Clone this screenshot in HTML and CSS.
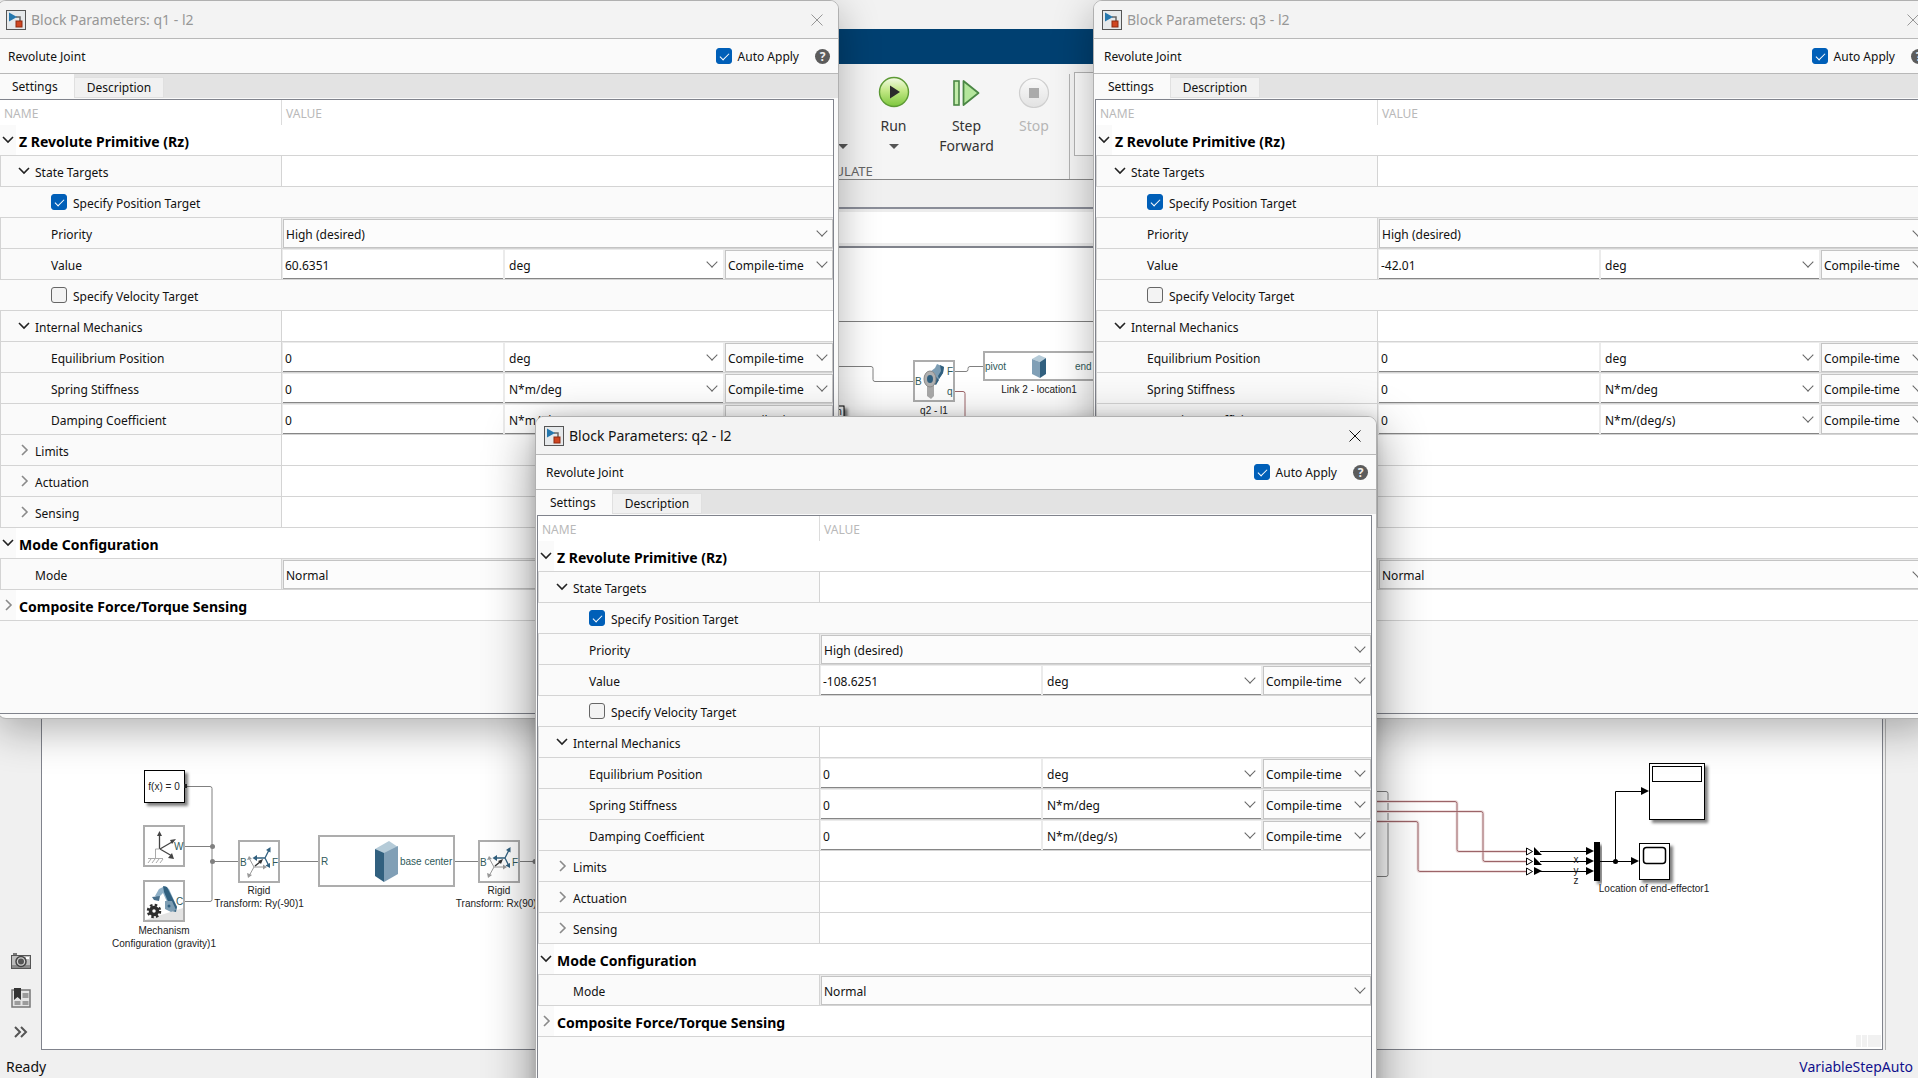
FILE: index.html
```
<!DOCTYPE html>
<html lang="en">
<head>
    <meta charset="UTF-8">
    <meta name="viewport" content="width=device-width, initial-scale=1.0">
    <title>Block Parameters</title>
    <link rel="stylesheet" href="styles.css">
</head>
<body>
    <div class="model-window">
        <div class="window-title"></div>
        <div class="tab-bar"></div>
        <div class="toolstrip">
            <div class="section">
                <div class="tools">
                    <button class="tool tool-narrow" aria-label="More"><span class="caret"></span></button>
                    <button class="tool tool-wide">
                        <svg width="32" height="32" viewBox="0 0 32 32">
                            <defs>
                                <linearGradient id="runFill" x1="0" y1="0" x2="0" y2="1">
                                    <stop offset="0" stop-color="#f4fbe6"/>
                                    <stop offset="0.45" stop-color="#c3e886"/>
                                    <stop offset="1" stop-color="#7cc63c"/>
                                </linearGradient>
                                <linearGradient id="stopFill" x1="0" y1="0" x2="0" y2="1">
                                    <stop offset="0" stop-color="#fafafa"/>
                                    <stop offset="1" stop-color="#e2e2e2"/>
                                </linearGradient>
                            </defs>
                            <circle cx="16" cy="16" r="14.5" fill="url(#runFill)" stroke="#5d9a35" stroke-width="1.4"/>
                            <path d="M12 9.5v13l10-6.5z" fill="#2b2b2b"/>
                        </svg>
                        <span>Run</span>
                        <span class="caret"></span>
                    </button>
                    <button class="tool tool-wide">
                        <svg width="32" height="32" viewBox="0 0 32 32">
                            <rect x="3" y="5" width="5" height="24" fill="#c3ecaa" stroke="#4b8745" stroke-width="1.6"/>
                            <path d="M12.500 5v24l15-12z" fill="#b4e69c" stroke="#4b8745" stroke-width="1.8" stroke-linejoin="round"/>
                        </svg>
                        <span>Step<br>Forward</span>
                    </button>
                    <button class="tool" disabled>
                        <svg width="32" height="32" viewBox="0 0 32 32">
                            <circle cx="16" cy="17" r="14.5" fill="url(#stopFill)" stroke="#cfcfcf" stroke-width="1.2"/>
                            <rect x="11" y="12" width="10" height="10" fill="#ababab"/>
                        </svg>
                        <span>Stop</span>
                    </button>
                </div>
                <div class="section-name">SIMULATE</div>
            </div>
            <div class="gallery"></div>
        </div>
        <div class="file-tabs"></div>
        <div class="breadcrumb"></div>
        <div class="editor">
            <div class="palette">
                <svg width="20" height="17" viewBox="0 0 20 17">
                    <rect x="2" y="0" width="4" height="3" fill="#777"/>
                    <rect x="0.5" y="2.500" width="19" height="13" fill="#bdbdbd" stroke="#555"/>
                    <rect x="1" y="12" width="18" height="3" fill="#8a8a8a"/>
                    <circle cx="10" cy="8.500" r="5" fill="#cfcfcf" stroke="#444" stroke-width="1.5"/>
                    <circle cx="10" cy="8.500" r="3" fill="#555"/>
                    <rect x="15" y="4" width="3" height="2" fill="#fff"/>
                </svg>
                <svg width="20" height="20" viewBox="0 0 20 20">
                    <rect x="1" y="2" width="18" height="17" fill="#e4e4e4" stroke="#777" stroke-width="1.5"/>
                    <rect x="11.500" y="5" width="6" height="5" fill="#9b9b9b"/>
                    <rect x="3.500" y="13" width="6" height="4" fill="#9b9b9b"/>
                    <rect x="11.500" y="13" width="6" height="4" fill="#9b9b9b"/>
                    <path d="M3 0h7v12l-3.500-3L3 12z" fill="#333"/>
                </svg>
                <svg width="20" height="12" viewBox="0 0 20 12">
                    <path d="M4 1l5 5-5 5M10 1l5 5-5 5" fill="none" stroke="#555" stroke-width="2"/>
                </svg>
            </div>
            <div class="canvas">
                <svg class="diagram" width="1900" height="800">
                    <defs>
                        <filter id="drop" x="-20%" y="-20%" width="150%" height="150%">
                            <feDropShadow dx="3" dy="3" stdDeviation="1.500" flood-opacity="0.5"/>
                        </filter>
                        <g id="brick">
                            <path d="M0 8l14-8 9 6-14 8z" fill="#b5cbd8"/>
                            <path d="M0 8l9 4v29l-9-6z" fill="#31607f"/>
                            <path d="M9 12l14-7v28l-14 8z" fill="#809fb6"/>
                        </g>
                        <!-- small brick, lit from the other side -->
                        <g id="brick-small">
                            <path d="M0 4l7-4 7 3-6 4z" fill="#b5cbd8"/>
                            <path d="M0 4l8 3v16l-8-4z" fill="#809fb6"/>
                            <path d="M8 7l6-4v16l-6 4z" fill="#31607f"/>
                        </g>
                        <!-- rigid transform block, 41 x 41 -->
                        <g id="rigid">
                            <rect class="block" x="0" y="0" width="40" height="41"/>
                            <path d="M15 26l-5-9M15 26h10M15 26l-5 9" stroke="#999"/>
                            <path d="M8 19l2-4 3 3zM24 23.500l4 2.500-4 2.500zM8 32l1 5 4-3z" fill="#999"/>
                            <path d="M26 17H16M26 17l4-8M26 17l4 8" stroke="#31607f" stroke-width="1.300"/>
                            <path d="M18 14l-4.500 3 4.500 3zM27 9l4.500-3v5.500zM26.500 24.500l4.500 2.500v-5z" fill="#31607f"/>
                            <path d="M16 25l5-4" stroke="#333" stroke-width="1.500"/>
                            <path d="M19 20l5-2-2 5z" fill="#333"/>
                            <text class="port" x="1" y="25">B</text>
                            <text class="port" x="33" y="25">F</text>
                        </g>
                    </defs>
                    <g transform="translate(-42 -248)">
                        <path class="frame" d="M42 321.500H1883"/>

                        <!-- second arm link -->
                        <path class="wire" d="M830 366.500h41q2 0 2 2v11q0 2 2 2h39M954 371.500h12q2 0 2-2v-1q0-2 2-2h14"/>
                        <path class="signal" d="M954 391.500h9q2 0 2 2v40"/>
                        <rect class="block" x="914" y="361" width="40" height="40"/>
                        <path d="M930 372l5-4 2-4 7 3-1 6-6 9-3 3z" fill="#7d9db3"/>
                        <path d="M940 365l4 2-1 6-4 6-1-3 3-5zM935 376l4 4-3 5-3-2z" fill="#31607f"/>
                        <path d="M927 384h7v12l-3 3-4-3z" fill="#aaa"/>
                        <ellipse cx="930" cy="379" rx="6" ry="8" fill="#b0b0b0" stroke="#8a8a8a"/>
                        <ellipse cx="930" cy="379" rx="3" ry="4" fill="#31607f"/>
                        <text class="port" x="915" y="385">B</text>
                        <text class="port" x="947" y="375">F</text>
                        <text class="port" x="947" y="395">q</text>
                        <text class="label" x="934" y="414">q2 - l1</text>
                        <rect class="block" x="984" y="352" width="130" height="28"/>
                        <use href="#brick-small" x="1032" y="355"/>
                        <text class="port" x="985" y="370">pivot</text>
                        <text class="port" x="1075" y="370">end</text>
                        <text class="label" x="1039" y="393">Link 2 - location1</text>
                        <rect class="sim-block" x="800" y="406" width="44" height="26" filter="url(#drop)"/>
                        <text class="label" x="839" y="415">n</text>

                        <!-- base -->
                        <path class="wire" d="M186 786.500h24q2 0 2 2v111q0 2-2 2h-26M184 846.500h28M212 861.500h27M279 861.500h40M454 861.500h25M519 861.500h30"/>
                        <circle cx="212.500" cy="846.500" r="2.500" fill="#808080"/>
                        <circle cx="212.500" cy="861.500" r="2.500" fill="#808080"/>
                        <circle cx="535" cy="861.500" r="2.500" fill="#808080"/>
                        <rect class="sim-block" x="144.500" y="770.500" width="40" height="32" filter="url(#drop)"/>
                        <rect x="184" y="784" width="3" height="4" fill="#222"/>
                        <text class="label" x="164" y="790">f(x) = 0</text>

                        <rect class="block" x="144" y="826" width="40" height="40"/>
                        <path d="M159.500 849v-14M160 849l12-7M160 849l12 7" stroke="#444" stroke-width="1.300"/>
                        <path d="M157 836l2.500-5 2.500 5zM170 840l6-1-4 5zM172 853l2 6-6-1z" fill="#444"/>
                        <path d="M159.500 849h-4v9M148 858.500h15M151 859l-3 4M155 859l-3 4M159 859l-3 4M163 859l-3 4" fill="none" stroke="#aaa"/>
                        <text class="port" x="174" y="850">W</text>

                        <rect class="block" x="144" y="881" width="40" height="40"/>
                        <path d="M145 920l38-12v12z" fill="#e3e3e3"/>
                        <path d="M155 896l4-7 6-3 4 3 8 18-6 4-8-18-5 5z" fill="#8fb0c7"/>
                        <path d="M163 886l4 1 10 20-1 5-4-1-8-19z" fill="#31607f"/>
                        <path d="M165 901l7 0 4 9-5 2-6-3z" fill="#7d9db3"/>
                        <circle cx="169" cy="906" r="1.500" fill="#31607f"/>
                        <path d="M152 897l8-1-1 5-5-1z" fill="#49708c"/>
                        <circle cx="154" cy="911" r="3.500" fill="none" stroke="#2d2d2d" stroke-width="3.500"/>
                        <circle cx="154" cy="911" r="6" fill="none" stroke="#2d2d2d" stroke-width="2.500" stroke-dasharray="2.500 2.210"/>
                        <text class="port" x="176" y="905">C</text>
                        <text class="label" x="164" y="934">Mechanism</text>
                        <text class="label" x="164" y="947">Configuration (gravity)1</text>

                        <use href="#rigid" x="239" y="841"/>
                        <text class="label" x="259" y="894">Rigid</text>
                        <text class="label" x="259" y="907">Transform: Ry(-90)1</text>
                        <rect class="block" x="319" y="836" width="135" height="50"/>
                        <use href="#brick" x="375" y="841"/>
                        <text class="port" x="321" y="865">R</text>
                        <text class="port" x="400" y="865">base center</text>
                        <use href="#rigid" x="479" y="841"/>
                        <text class="label" x="499" y="894">Rigid</text>
                        <text class="label" x="499" y="907">Transform: Rx(90)1</text>

                        <!-- end effector position -->
                        <path class="wire" d="M1370 791.500h16q2 0 2 2v81q0 2-2 2h-16"/>
                        <path class="halo" d="M1370 801.500h85q2 0 2 2v46q0 2 2 2h67M1370 811.500h111q2 0 2 2v46q0 2 2 2h41M1370 821.500h46q2 0 2 2v46q0 2 2 2h106"/>
                        <path class="signal" d="M1370 801.500h85q2 0 2 2v46q0 2 2 2h67M1370 811.500h111q2 0 2 2v46q0 2 2 2h41M1370 821.500h46q2 0 2 2v46q0 2 2 2h106"/>
                        <path d="M1526.500 848v7l6-3.500zM1526.500 858v7l6-3.500zM1526.500 868v7l6-3.500z" fill="#fff" stroke="#000"/>
                        <path d="M1534 847v8h8zM1534 857v8h8zM1534 867v8l8-4zM1586 847v8l8-4zM1586 857v8l8-4zM1586 867v8l8-4z"/>
                        <path class="line" d="M1540 851.500h48M1540 861.500h48M1540 871.500h48M1600 861.500h32M1615.500 861V791.500H1642"/>
                        <text class="label" x="1576" y="863">x</text>
                        <text class="label" x="1576" y="874">y</text>
                        <text class="label" x="1576" y="884">z</text>
                        <rect x="1594" y="842" width="6" height="39" filter="url(#drop)"/>
                        <circle cx="1615.500" cy="861.500" r="2.500"/>
                        <path d="M1631 857v8l8-4zM1641 787v8l8-4z"/>
                        <rect class="sim-block" x="1649.500" y="763.500" width="55" height="56" filter="url(#drop)"/>
                        <rect class="sim-block" x="1652.500" y="766.500" width="49" height="15"/>
                        <rect class="sim-block" x="1639.500" y="843.500" width="30" height="36" filter="url(#drop)"/>
                        <rect class="sim-block" x="1643.500" y="847.500" width="22" height="16" rx="3" stroke-width="1.500"/>
                        <text class="label" x="1654" y="892">Location of end-effector1</text>
                        <path d="M1856 1035h5v12h-5zM1862 1035h5v12h-5zM1868 1035h13v12h-13z" fill="#f1f1f1"/>
                    </g>
                </svg>
            </div>
            <div class="side-panel"></div>
        </div>
        <div class="status-bar">
            <span>Ready</span>
            <a href="#">VariableStepAuto</a>
        </div>
    </div>

    <div class="desktop" id="dialogs"></div>

    <script>
        const dialogs = [
            { id: 'q1', title: 'q1 - l2', value: '60.6351' },
            { id: 'q3', title: 'q3 - l2', value: '-42.01' },
            { id: 'q2', title: 'q2 - l2', value: '-108.6251', active: true }
        ];

        const rows = [
            { type: 'section', name: 'Z Revolute Primitive (Rz)', open: true },
            { type: 'group', name: 'State Targets', open: true },
            { type: 'check', name: 'Specify Position Target', checked: true },
            { type: 'choice', name: 'Priority', value: 'High (desired)', level: 2 },
            { type: 'quantity', name: 'Value', unit: 'deg' },
            { type: 'check', name: 'Specify Velocity Target', checked: false },
            { type: 'group', name: 'Internal Mechanics', open: true },
            { type: 'quantity', name: 'Equilibrium Position', value: '0', unit: 'deg' },
            { type: 'quantity', name: 'Spring Stiffness', value: '0', unit: 'N*m/deg' },
            { type: 'quantity', name: 'Damping Coefficient', value: '0', unit: 'N*m/(deg/s)' },
            { type: 'group', name: 'Limits' },
            { type: 'group', name: 'Actuation' },
            { type: 'group', name: 'Sensing' },
            { type: 'section', name: 'Mode Configuration', open: true },
            { type: 'choice', name: 'Mode', value: 'Normal', level: 1 },
            { type: 'section', name: 'Composite Force/Torque Sensing' }
        ];

        function toggle(open, name) {
            const d = open ? 'M1 3l5 5 5-5' : 'M4 1l5 5-5 5';
            return `<button class="toggle ${open ? 'open' : ''}"><svg width="12" height="12" viewBox="0 0 12 12"><path d="${d}"/></svg><span>${name}</span></button>`;
        }

        function select(id, value, label, extra) {
            return `<span class="select ${extra}"><select id="${id}" aria-label="${label}"><option>${value}</option></select></span>`;
        }

        function renderRow(row, index, dialog) {
            const id = `${dialog.id}-row${index}`;
            if (row.type === 'section') {
                return `<tr class="section-row"><td colspan="2">${toggle(row.open, row.name)}</td></tr>`;
            }
            if (row.type === 'group') {
                return `<tr><td class="name level-1">${toggle(row.open, row.name)}</td><td></td></tr>`;
            }
            if (row.type === 'check') {
                return `<tr class="check-row"><td colspan="2"><label class="check"><input type="checkbox" ${row.checked ? 'checked' : ''}>${row.name}</label></td></tr>`;
            }
            if (row.type === 'choice') {
                return `<tr><td class="name level-${row.level} plain"><label for="${id}">${row.name}</label></td>
                    <td class="fields"><div>${select(id, row.value, row.name, 'boxed wide')}</div></td></tr>`;
            }
            return `<tr><td class="name level-2 plain"><label for="${id}">${row.name}</label></td>
                <td class="fields"><div><input id="${id}" type="text" value="${row.value || dialog.value}">
                ${select(id + '-unit', row.unit, row.name + ' unit', 'unit')}
                ${select(id + '-conf', 'Compile-time', row.name + ' configurability', 'boxed')}</div></td></tr>`;
        }

        function renderDialog(dialog) {
            return `<div class="dialog dialog-${dialog.id} ${dialog.active ? 'active' : ''}" role="dialog">
                <div class="dialog-title">
                    <svg width="20" height="20" viewBox="0 0 20 20">
                        <rect x="0.500" y="0.500" width="19" height="19" fill="#e6e9eb" stroke="#555"/>
                        <path d="M10 7h4v5" fill="none" stroke="#666" stroke-width="1.500"/>
                        <path d="M3 2.500v9l8-4.500z" fill="#2577ad"/>
                        <rect x="10" y="11" width="6" height="6" fill="#cf4520" stroke="#8e2a10"/>
                    </svg>
                    <span>Block Parameters: ${dialog.title}</span>
                    <button class="close" aria-label="Close"><svg width="12" height="12" viewBox="0 0 12 12"><path d="M0.500 0.500l11 11M11.500 0.500l-11 11"/></svg></button>
                </div>
                <div class="dialog-bar">
                    <span>Revolute Joint</span>
                    <label class="check"><input type="checkbox" checked>Auto Apply</label>
                    <button class="help" aria-label="Help">?</button>
                </div>
                <div class="tabs"><button class="tab selected">Settings</button><button class="tab">Description</button></div>
                <div class="panel">
                    <table>
                        <colgroup><col class="name-col"><col></colgroup>
                        <thead><tr><th>NAME</th><th>VALUE</th></tr></thead>
                        <tbody>${rows.map((row, i) => renderRow(row, i, dialog)).join('')}</tbody>
                    </table>
                </div>
            </div>`;
        }

        document.getElementById('dialogs').innerHTML = dialogs.map(renderDialog).join('');
    </script>
</body>
</html>
```
FILE: styles.css
```
* {
    box-sizing: border-box;
}

body {
    margin: 0;
    height: 100vh;
    overflow: hidden;
    position: relative;
    background-color: #f0f0f0;
    font-family: "Noto Sans", "Open Sans", sans-serif;
    font-size: 12px;
    color: #111;
}

button, input, select {
    font: inherit;
    color: inherit;
    margin: 0;
    padding: 0;
    border: none;
    border-radius: 0;
    background: none;
}

/* model editor behind the dialogs */

.model-window {
    height: 100vh;
    display: flex;
    flex-direction: column;
}

.window-title {
    height: 29px;
    background-color: #f2f2f2;
}

.tab-bar {
    height: 35px;
    background-color: #004071;
}

.toolstrip {
    height: 116px;
    display: flex;
    padding-left: 615px;
    background-color: #f5f5f5;
    border-bottom: 1px solid #888;
}

.section {
    width: 455px;
    margin-top: 10px;
    display: flex;
    flex-direction: column;
    border-right: 1px solid #b4b4b4;
}

.tools {
    flex: 1;
    display: flex;
    justify-content: flex-end;
    padding-right: 4px;
}

.tool {
    width: 62px;
    display: flex;
    flex-direction: column;
    align-items: center;
    padding-top: 2px;
    font-size: 14px;
    line-height: 20px;
    color: #333;
}

.tool svg {
    margin-bottom: 8px;
}

.tool:disabled {
    color: #b5b5b5;
}

.tool-wide {
    width: 73px;
}

.tool-narrow {
    width: 28px;
}

.tool-narrow .caret {
    margin-top: 68px;
}

.caret {
    margin-top: 8px;
    border: 5px solid transparent;
    border-top-color: #555;
    border-bottom: none;
}

.section-name {
    height: 17px;
    line-height: 18px;
    font-size: 13px;
    text-align: center;
    color: #666;
}

.gallery {
    flex: 1;
    margin: 8px 0 23px 4px;
    background-color: #fdfdfd;
    border: 1px solid #b4b4b4;
}

.file-tabs {
    height: 29px;
    background-color: #f0f0f0;
    border-bottom: 2px solid #8a8d98;
}

.breadcrumb {
    height: 37px;
    background-color: #fff;
    border: solid #ededed;
    border-width: 3px 0;
}

.editor {
    flex: 1;
    display: flex;
    min-height: 0;
}

.palette {
    width: 41px;
    display: flex;
    flex-direction: column;
    align-items: center;
    justify-content: flex-end;
    gap: 18px;
    padding-bottom: 12px;
}

.canvas {
    flex: 1;
    overflow: hidden;
    background-color: #fff;
    border: 1px solid #80838c;
    border-top-width: 2px;
}

.diagram {
    display: block;
    fill: #000;
}

.side-panel {
    width: 33px;
    margin-left: 2px;
    border-left: 1px solid #b4b4b4;
}

.status-bar {
    height: 28px;
    display: flex;
    justify-content: space-between;
    align-items: center;
    padding: 5px 5px 0 6px;
    font-size: 14px;
}

.status-bar a {
    color: #10108c;
    text-decoration: none;
}

.diagram text {
    font-family: "Liberation Sans", sans-serif;
    font-size: 10px;
}

.port {
    fill: #2f5a5a;
}

.label {
    text-anchor: middle;
    fill: #222;
}

.block {
    fill: none;
    stroke: #adadad;
    stroke-width: 2;
}

.sim-block {
    fill: #fff;
    stroke: #000;
}

.wire, .frame {
    fill: none;
    stroke: #808080;
}

.signal {
    fill: none;
    stroke: #9c6468;
}

.halo {
    fill: none;
    stroke: #eedfdf;
    stroke-width: 3;
}

.line {
    fill: none;
    stroke: #000;
}

/* block parameter dialogs */

.desktop {
    position: absolute;
    inset: 0;
    overflow: hidden;
}

.dialog {
    position: absolute;
    width: 842px;
    height: 719px;
    display: flex;
    flex-direction: column;
    background-color: #fafafa;
    border: 1px solid #b0b0b0;
    border-radius: 9px;
    overflow: hidden;
    box-shadow: 0 12px 40px rgba(0, 0, 0, 0.3);
}

.dialog.active {
    box-shadow: 0 16px 50px rgba(0, 0, 0, 0.45), 0 0 12px rgba(0, 0, 0, 0.12);
}

.dialog-q1 {
    left: -3px;
    top: 0;
}

.dialog-q2 {
    left: 535px;
    top: 416px;
}

.dialog-q3 {
    left: 1093px;
    top: 0;
}

.dialog-title {
    height: 38px;
    display: flex;
    align-items: center;
    gap: 5px;
    padding: 0 15px 0 8px;
    background-color: #f3f3f3;
    border-bottom: 1px solid #b8b8b8;
    font-size: 14px;
    color: #979797;
}

.active .dialog-title {
    color: #111;
}

.close {
    display: flex;
    margin-left: auto;
}

.close path {
    fill: none;
    stroke: currentColor;
}

.dialog-bar {
    height: 35px;
    display: flex;
    align-items: center;
    padding: 0 8px 0 10px;
    border-bottom: 1px solid #b8b8b8;
}

.dialog-bar .check {
    margin-left: auto;
}

.help {
    width: 15px;
    height: 15px;
    margin-left: 16px;
    border-radius: 50%;
    background-color: #5c5c5c;
    color: #eee;
    font-weight: bold;
    line-height: 15px;
}

.tabs {
    height: 25px;
    display: flex;
    align-items: flex-end;
    background-color: #e3e3e3;
    border-bottom: 1px solid #fafafa;
}

.tab {
    height: 21px;
    padding: 0 12px;
    background-color: #f1f1f1;
    border: 1px solid #e0e0e0;
}

.tab.selected {
    height: 24px;
    padding: 0 16px 0 14px;
    background-color: #fafafa;
    border: none;
}

.panel {
    flex: 1;
    margin: 0 4px 4px 1px;
    border: 1px solid #80838c;
}

table {
    width: 100%;
    table-layout: fixed;
    border-spacing: 0;
    background-color: #fff;
}

.name-col {
    width: 282px;
}

th {
    height: 25px;
    padding: 2px 4px 0;
    font-weight: normal;
    text-align: left;
    color: #b9b9b9;
}

th:first-child {
    border-right: 1px solid #dcdcdc;
}

td {
    height: 31px;
    padding: 2px 0 0;
    border-bottom: 1px solid #d4d4d4;
}

.name {
    background-color: #fafafa;
    border-left: 1px solid #d4d4d4;
    border-right: 1px solid #d4d4d4;
}

.name.level-1 {
    padding-left: 17px;
}

.name.level-1.plain {
    padding-left: 34px;
}

.name.level-2.plain {
    padding-left: 50px;
}

.toggle {
    display: flex;
    align-items: center;
    gap: 5px;
}

.toggle svg {
    margin-bottom: 2px;
}

.toggle path {
    fill: none;
    stroke: #8a8a8a;
    stroke-width: 1.6;
}

.toggle.open path {
    stroke: #222;
}

.section-row td {
    padding-left: 2px;
    background: linear-gradient(to right, #fafafa 16px, #fff 16px);
    font-size: 14px;
    font-weight: bold;
    color: #000;
}

.check-row td {
    padding-left: 51px;
    background-color: #fafafa;
}

.check {
    display: flex;
    align-items: center;
    gap: 6px;
}

.check input {
    appearance: none;
    position: relative;
    width: 16px;
    height: 16px;
    background-color: #f3f3f3;
    border: 1px solid #666;
    border-radius: 3px;
}

.check-row input {
    margin-bottom: 2px;
}

.check input:checked {
    background-color: #005fb8;
    border-color: #005fb8;
}

.check input:checked::after {
    content: "";
    position: absolute;
    left: 5px;
    top: 2px;
    width: 4px;
    height: 8px;
    border: solid #fff;
    border-width: 0 1px 1px 0;
    transform: rotate(45deg);
}

.fields {
    padding: 0;
    background-color: #ebebeb;
}

.fields div {
    display: flex;
    gap: 2px;
    height: 30px;
    padding: 1px 0 0 1px;
}

.fields input, .unit {
    flex: 1 1 0;
    min-width: 0;
    height: 29px;
    background-color: #fff;
    border-bottom: 1px solid #868686;
}

.fields input {
    padding: 2px 0 0 2px;
}

.select {
    position: relative;
    display: flex;
}

.select::after {
    content: "";
    position: absolute;
    right: 7px;
    top: 8px;
    width: 7px;
    height: 7px;
    border: solid #666;
    border-width: 0 1px 1px 0;
    transform: rotate(45deg);
    pointer-events: none;
}

.select select {
    appearance: none;
    flex: 1;
    padding: 2px 0 0 2px;
}

.unit select {
    padding-left: 4px;
}

.boxed {
    width: 108px;
    height: 29px;
    background-color: #fcfcfc;
    border: 1px solid #c4c4c4;
}

.boxed::after {
    right: 6px;
    top: 7px;
}

.boxed.wide {
    flex: 1;
}
```
